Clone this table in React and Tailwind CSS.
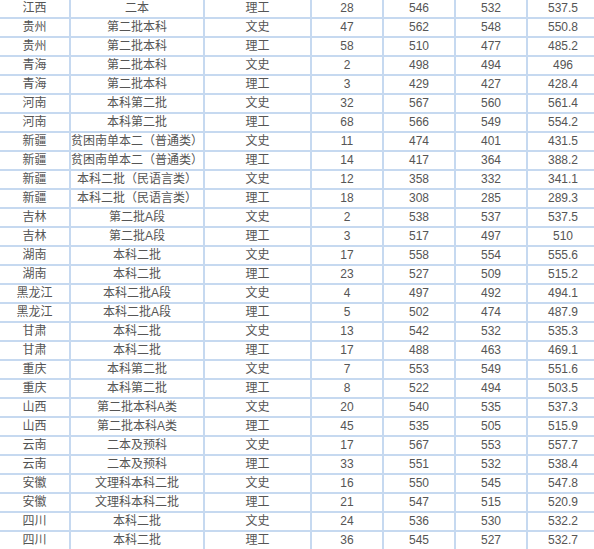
import React from "react";

const rows = [
  ["江西", "二本", "理工", "28", "546", "532", "537.5"],
  ["贵州", "第二批本科", "文史", "47", "562", "548", "550.8"],
  ["贵州", "第二批本科", "理工", "58", "510", "477", "485.2"],
  ["青海", "第二批本科", "文史", "2", "498", "494", "496"],
  ["青海", "第二批本科", "理工", "3", "429", "427", "428.4"],
  ["河南", "本科第二批", "文史", "32", "567", "560", "561.4"],
  ["河南", "本科第二批", "理工", "68", "566", "549", "554.2"],
  ["新疆", "贫困南单本二（普通类）", "文史", "11", "474", "401", "431.5"],
  ["新疆", "贫困南单本二（普通类）", "理工", "14", "417", "364", "388.2"],
  ["新疆", "本科二批（民语言类）", "文史", "12", "358", "332", "341.1"],
  ["新疆", "本科二批（民语言类）", "理工", "18", "308", "285", "289.3"],
  ["吉林", "第二批A段", "文史", "2", "538", "537", "537.5"],
  ["吉林", "第二批A段", "理工", "3", "517", "497", "510"],
  ["湖南", "本科二批", "文史", "17", "558", "554", "555.6"],
  ["湖南", "本科二批", "理工", "23", "527", "509", "515.2"],
  ["黑龙江", "本科二批A段", "文史", "4", "497", "492", "494.1"],
  ["黑龙江", "本科二批A段", "理工", "5", "502", "474", "487.9"],
  ["甘肃", "本科二批", "文史", "13", "542", "532", "535.3"],
  ["甘肃", "本科二批", "理工", "17", "488", "463", "469.1"],
  ["重庆", "本科第二批", "文史", "7", "553", "549", "551.6"],
  ["重庆", "本科第二批", "理工", "8", "522", "494", "503.5"],
  ["山西", "第二批本科A类", "文史", "20", "540", "535", "537.3"],
  ["山西", "第二批本科A类", "理工", "45", "535", "505", "515.9"],
  ["云南", "二本及预科", "文史", "17", "567", "553", "557.7"],
  ["云南", "二本及预科", "理工", "33", "551", "532", "538.4"],
  ["安徽", "文理科本科二批", "文史", "16", "550", "545", "547.8"],
  ["安徽", "文理科本科二批", "理工", "21", "547", "515", "520.9"],
  ["四川", "本科二批", "文史", "24", "536", "530", "532.2"],
  ["四川", "本科二批", "理工", "36", "545", "527", "532.7"],
];

export default function App() {
  return (
    <div className="w-[594px] h-[549px] overflow-hidden bg-white">
      <div
        className="grid w-[598px] grid-cols-[69px_132px_105px_70px_70px_70px_70px] gap-[2px] bg-[#c6d9f0] text-[12px] leading-[17px] text-[#555555]"
        style={{ fontFamily: '"Liberation Sans", "Noto Sans CJK SC", sans-serif' }}
      >
        {rows.map((r, i) =>
          r.map((c, j) => (
            <div
              key={i + "-" + j}
              className="h-[17px] bg-white flex items-center justify-center whitespace-nowrap"
            >
              {c}
            </div>
          ))
        )}
      </div>
    </div>
  );
}
